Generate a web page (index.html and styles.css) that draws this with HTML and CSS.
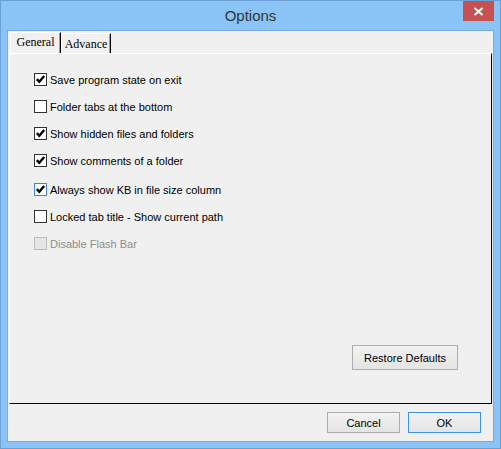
FILE: index.html
```html
<!DOCTYPE html>
<html lang="en">

<head>
    <meta charset="UTF-8">
    <title>Options</title>
    <link rel="stylesheet" href="styles.css">
</head>

<body>

    <div class="window">
        <div class="titlebar">
            <span class="title">Options</span>
            <span class="close-btn">
                <svg width="11" height="9" viewBox="0 0 11 9"><path d="M1.5 1 L9.5 8 M9.5 1 L1.5 8" stroke="#fff" stroke-width="2"/></svg>
            </span>
        </div>

        <div class="client">
            <div class="tabs">
                <div class="tab active">General</div>
                <div class="tab">Advance</div>
            </div>

            <div class="panel">
                <div class="options">
                    <label class="check-row"><span class="box checked"><svg width="11" height="11" viewBox="0 0 11 11"><path d="M1.8 5.2 L4.3 7.8 L9.2 2" fill="none" stroke="#000" stroke-width="2.4"/></svg></span>Save program state on exit</label>
                    <label class="check-row"><span class="box"></span>Folder tabs at the bottom</label>
                    <label class="check-row"><span class="box checked"><svg width="11" height="11" viewBox="0 0 11 11"><path d="M1.8 5.2 L4.3 7.8 L9.2 2" fill="none" stroke="#000" stroke-width="2.4"/></svg></span>Show hidden files and folders</label>
                    <label class="check-row"><span class="box checked"><svg width="11" height="11" viewBox="0 0 11 11"><path d="M1.8 5.2 L4.3 7.8 L9.2 2" fill="none" stroke="#000" stroke-width="2.4"/></svg></span>Show comments of a folder</label>
                    <label class="check-row spaced"><span class="box checked focus"><svg width="11" height="11" viewBox="0 0 11 11"><path d="M1.8 5.2 L4.3 7.8 L9.2 2" fill="none" stroke="#000" stroke-width="2.4"/></svg></span>Always show KB in file size column</label>
                    <label class="check-row"><span class="box"></span>Locked tab title - Show current path</label>
                    <label class="check-row disabled"><span class="box"></span>Disable Flash Bar</label>
                </div>

                <button class="btn restore-btn">Restore Defaults</button>
            </div>

            <div class="footer">
                <button class="btn">Cancel</button>
                <button class="btn default-btn">OK</button>
            </div>
        </div>
    </div>

</body>

</html>
```

FILE: styles.css
```css
body {
    margin: 0;
    font-family: "Liberation Sans", Arial, sans-serif;
}

.window {
    width: 501px;
    height: 449px;
    box-sizing: border-box;
    background-color: #8ac4f7;
    border: 1px solid #6c9fd2;
    display: flex;
    flex-direction: column;
}

.titlebar {
    position: relative;
    height: 29px;
    text-align: center;
    flex-shrink: 0;
}

.title {
    display: inline-block;
    font-size: 15px;
    line-height: 29px;
    color: #333;
}

.close-btn {
    position: absolute;
    top: 0;
    right: 6px;
    width: 31px;
    height: 20px;
    background-color: #c75050;
    display: flex;
    align-items: center;
    justify-content: center;
}

.client {
    margin: 0 6px 6px 6px;
    flex: 1;
    background-color: #f0f0f0;
    border: 1px solid #78acdf;
    padding: 1px 1px 0 1px;
    display: flex;
    flex-direction: column;
}

.tabs {
    display: flex;
    align-items: flex-end;
    height: 21px;
    padding-left: 1px;
}

.tab {
    font-family: "Liberation Serif", "Times New Roman", serif;
    font-size: 12px;
    color: #000;
    border-top: 1px solid #fff;
    border-left: 1px solid #fff;
    border-right: 1px solid #000;
    box-shadow: inset -1px 0 #a0a0a0;
    width: 50px;
    height: 20px;
    line-height: 21px;
    text-align: center;
    box-sizing: border-box;
}

.tab.active {
    width: 51px;
    height: 21px;
    line-height: 19px;
}

.panel {
    height: 351px;
    box-sizing: border-box;
    border-top: 1px solid #fff;
    border-left: 1px solid #fff;
    border-right: 1px solid #000;
    border-bottom: 1px solid #000;
    display: flex;
    flex-direction: column;
}

.options {
    padding: 19px 0 0 24px;
    display: flex;
    flex-direction: column;
    gap: 14px;
}

.check-row {
    display: flex;
    align-items: center;
    height: 13px;
    font-size: 11px;
    color: #000;
}

.check-row.spaced {
    margin-top: 2px;
}

.box {
    width: 13px;
    height: 13px;
    box-sizing: border-box;
    border: 1px solid #333;
    background-color: #fff;
    margin-right: 3px;
    display: flex;
    align-items: center;
    justify-content: center;
}

.box.focus {
    border-color: #3d87d6;
}

.check-row.disabled {
    color: #8d8d8d;
}

.check-row.disabled .box {
    border-color: #bcbcbc;
    background-color: #e6e6e6;
}

.btn {
    font-family: "Liberation Sans", Arial, sans-serif;
    font-size: 11px;
    color: #000;
    background: linear-gradient(#f2f2f2, #e4e4e4);
    border: 1px solid #adadad;
    padding: 0;
    margin: 0;
}

.restore-btn {
    width: 106px;
    height: 25px;
    margin-top: auto;
    margin-bottom: 33px;
    align-self: flex-end;
    margin-right: 33px;
}

.footer {
    display: flex;
    justify-content: flex-end;
    gap: 8px;
    padding: 8px 11px 0 0;
}

.footer .btn {
    width: 73px;
    height: 21px;
}

.footer .default-btn {
    border-color: #3c93e6;
}
```
